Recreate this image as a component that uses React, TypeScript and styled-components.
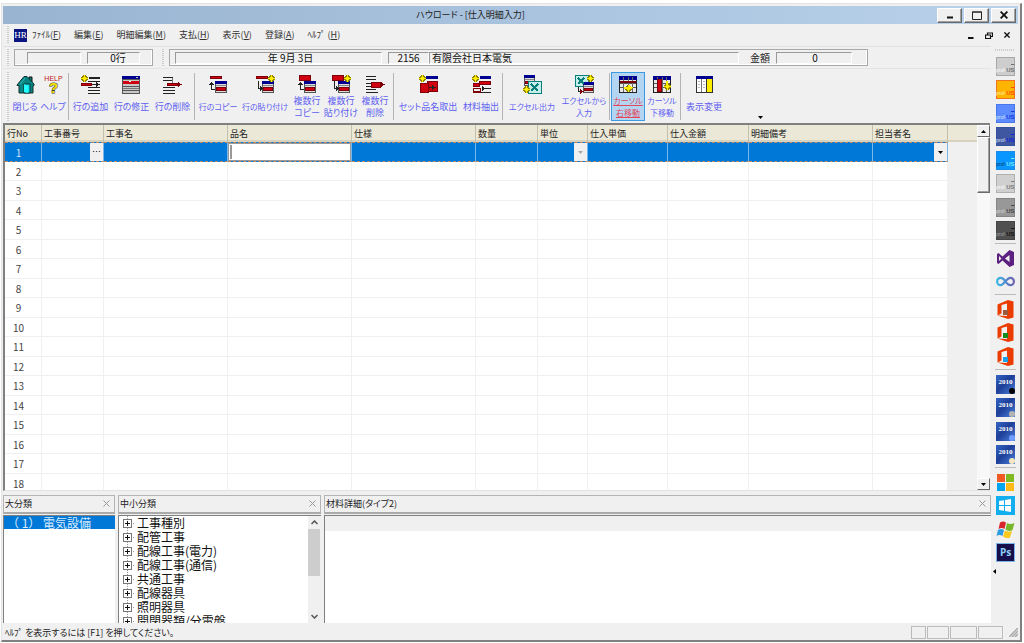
import React from "react";
import styled, { createGlobalStyle, css } from "styled-components";

const Global = createGlobalStyle`
  * { box-sizing: border-box; }
  html, body { margin: 0; background: #fff; }
  body, button, input {
    font-family: "Noto Sans CJK JP", "Liberation Sans", sans-serif;
    font-size: 9px;
    line-height: 12px;
    color: #222;
    font-feature-settings: "palt";
  }
  button { margin: 0; padding: 0; border: 0; background: none; }
  svg { display: block; flex: none; }
`;

/* ---------- frame ---------- */

const Frame = styled.div`
  height: 100vh;
  min-height: 560px;
  padding: 3px 2px 1px 1px;
`;
const Win = styled.div`
  height: 100%;
  display: flex;
  flex-direction: column;
  background: #f0f0f0;
  border: 1px solid #e3e3e3;
  border-right: 2px solid #808080;
  border-bottom: 2px solid #808080;
  padding: 2px 2px 0 1px;
`;
const TitleBar = styled.header`
  flex: none;
  height: 18px;
  display: grid;
  grid-template-columns: 1fr auto 1fr;
  align-items: center;
  background: linear-gradient(90deg, #99b4d1, #b9d1ea);
  padding-right: 2px;
`;
const Title = styled.h1`
  grid-column: 2;
  margin: 0 78px 0 0;
  font-size: 9px;
  font-weight: 400;
  line-height: 14px;
`;
const Caption = styled.div`
  display: flex;
  justify-content: flex-end;
  gap: 2px;
`;
const raised = css`
  background: #f0f0f0;
  border: 1px solid;
  border-color: #fff #696969 #696969 #fff;
`;
const CaptionButton = styled.button`
  ${raised}
  width: 25px;
  height: 15px;
  display: grid;
  place-items: center;
  box-shadow: inset -1px -1px #a0a0a0;
`;
const MenuBar = styled.nav`
  flex: none;
  height: 22px;
  display: flex;
  align-items: center;
  gap: 13px;
  padding: 0 2px 0 4px;
`;
const Grip = styled.span`
  flex: none;
  width: 2px;
  align-self: stretch;
  margin: 2px 0;
  background: repeating-linear-gradient(#ccc 0 1px, #f0f0f0 1px 2px);
`;
const MenuLead = styled.div`
  display: flex;
  align-items: center;
  align-self: stretch;
  gap: 5px;
`;
const Logo = styled.span`
  width: 13px;
  height: 13px;
  background: #0a1580;
  color: #fff;
  font: 9px/13px "Liberation Serif", serif;
  text-align: center;
`;
const MenuItem = styled.button`
  white-space: nowrap;
  line-height: 14px;
  color: #333;
`;
const MdiButtons = styled.div`
  margin-left: auto;
  display: flex;
`;
const MdiButton = styled.button`
  width: 18px;
  height: 14px;
  display: grid;
  place-items: center;
`;
const Main = styled.div`
  flex: 1;
  min-height: 0;
  display: flex;
`;
const Work = styled.main`
  flex: 1;
  min-width: 0;
  display: flex;
  flex-direction: column;
`;

/* ---------- information strip ---------- */

const InfoBar = styled.div`
  flex: none;
  height: 22px;
  display: flex;
  align-items: center;
  gap: 5px;
  padding-left: 4px;
  border-top: 1px solid #e0e0e0;
`;
const InfoGroup = styled.div<{ $wide?: boolean }>`
  display: flex;
  align-items: center;
  height: 17px;
  border: 1px solid #a8a8a8;
  box-shadow: inset -1px -1px #fff;
  gap: 6px;
  ${(p) =>
    p.$wide
      ? "flex: 1; max-width: 699px; padding: 0 15px 0 5px;"
      : "width: 139px; padding: 0 12px; margin-right: 4px;"}
`;
const Field = styled.input<{ $w?: number; $left?: boolean; $indent?: number }>`
  ${(p) => (p.$w ? `width: ${p.$w}px; flex: none;` : "flex: 1; min-width: 0;")}
  height: 12px;
  padding: 0 2px 0 ${(p) => p.$indent ?? 2}px;
  border: 1px solid;
  border-color: #999 #fff #fff #999;
  background: #f0f0f0;
  font-size: 10px;
  line-height: 10px;
  color: #111;
  text-align: ${(p) => (p.$left ? "left" : "center")};
`;
const NamePair = styled.div`
  flex: 1;
  display: flex;
`;
const FieldLabel = styled.label`
  flex: none;
  margin-left: 5px;
  font-size: 10px;
`;

/* ---------- toolbar ---------- */

const ToolBar = styled.div`
  flex: none;
  height: 55px;
  display: flex;
  align-items: stretch;
  padding: 3px 0 2px 4px;
  border-top: 1px solid #e4e4e4;
`;
const ToolGrip = styled(Grip)`
  margin: 0 2px 0 0;
`;
const ToolSep = styled.span`
  flex: none;
  width: 1px;
  margin: 1px;
  background: #b4b4b4;
`;
const Tool = styled.button<{ $w: number; $on?: boolean }>`
  flex: none;
  width: ${(p) => p.$w}px;
  display: flex;
  flex-direction: column;
  align-items: center;
  padding-top: 2px;
  border: 1px solid ${(p) => (p.$on ? "#3c9be0" : "transparent")};
  background: ${(p) => (p.$on ? "#b4d5f2" : "none")};
  color: ${(p) => (p.$on ? "#e2475a" : "#5f5ff0")};
  text-decoration: ${(p) => (p.$on ? "underline" : "none")};
`;
const ToolLabel = styled.span<{ $compact?: boolean }>`
  flex: 1;
  display: grid;
  align-content: center;
  white-space: pre;
  font-size: ${(p) => (p.$compact ? 8 : 9)}px;
  line-height: 12px;
`;
const Overflow = styled.button`
  align-self: flex-end;
  width: 10px;
  height: 7px;
  margin-left: 29px;
  display: grid;
  place-items: center;
`;

/* ---------- grid ---------- */

const GridBox = styled.section`
  flex: 1;
  min-height: 0;
  display: flex;
  border-top: 2px solid #808080;
  border-left: 2px solid #808080;
  border-bottom: 1px solid #e3e3e3;
  margin-right: 1px;
`;
const GridView = styled.div`
  flex: 1;
  min-width: 0;
  overflow: hidden;
  background: linear-gradient(#ebe8d7 0 15px, #d6d2c0 15px 17px, #f0f0f0 17px);
`;
const Table = styled.table`
  width: 943px;
  table-layout: fixed;
  border-collapse: separate;
  border-spacing: 0;
`;
const Th = styled.th`
  height: 17px;
  padding: 0 2px;
  font-weight: 400;
  text-align: left;
  white-space: nowrap;
  line-height: 13px;
  border-right: 1px solid #c4c0ae;
`;
const Tr = styled.tr<{ $sel?: boolean }>`
  height: 20px;
  &:nth-child(even) { height: 19px; }
  background: ${(p) => (p.$sel ? "#0078d7" : "#fff")};
`;
const Td = styled.td<{ $sel?: boolean; $no?: boolean }>`
  padding: 0;
  border-right: 1px solid ${(p) => (p.$sel ? "#7ab8ea" : "#f0f0f0")};
  border-bottom: 1px solid #f0f0f0;
  ${(p) => p.$sel && "border-top: 1px dashed #b98a66; border-bottom: 1px dashed #b98a66;"}
  ${(p) => p.$no && "padding-right: 9px; text-align: center; font-size: 10px; line-height: 13px;"}
  color: ${(p) => (p.$sel ? "#cfe6fa" : "#444")};
`;
const CellEnd = styled.div`
  display: flex;
  justify-content: flex-end;
`;
const CellButton = styled.button<{ $dim?: boolean }>`
  width: 13px;
  height: 18px;
  display: grid;
  place-items: center;
  background: #f0f0f0;
  color: ${(p) => (p.$dim ? "#a8a8a8" : "#000")};
`;
const CellInput = styled.input`
  display: block;
  width: 100%;
  height: 14px;
  padding: 0 2px;
  background: #fff;
  border: 0;
  border-left: 2px solid #999;
  outline: none;
  font-size: 10px;
`;
const EditCell = styled.div`
  display: flex;
  align-items: center;
  background: #fff;
  border: 1px solid #999;
  height: 18px;
  padding-left: 1px;
`;
const ScrollCol = styled.div`
  flex: none;
  width: 13px;
  display: flex;
  flex-direction: column;
  background: #f8f8f8;
`;
const ScrollButton = styled.button`
  ${raised}
  flex: none;
  height: 12px;
  display: grid;
  place-items: center;
`;
const Thumb = styled.div`
  ${raised}
  flex: none;
  height: 56px;
  margin-bottom: auto;
  box-shadow: inset -1px -1px #a0a0a0;
`;

/* ---------- docked panes ---------- */

const Panes = styled.div`
  flex: none;
  height: 134px;
  display: flex;
  gap: 3px;
  padding: 4px 0 2px;
`;
const Pane = styled.section<{ $w?: number }>`
  ${(p) => (p.$w ? `flex: none; width: ${p.$w}px;` : "flex: 1; min-width: 0;")}
  display: flex;
  flex-direction: column;
  gap: 1px;
`;
const PaneHead = styled.div`
  flex: none;
  height: 19px;
  display: flex;
  justify-content: space-between;
  align-items: center;
  padding: 0 4px 1px 1px;
  border: 1px solid #b4b4b4;
  border-bottom: 2px solid #aaa;
`;
const PaneTitle = styled.h2`
  margin: 0;
  font-size: 9px;
  font-weight: 400;
`;
const PaneBody = styled.div`
  flex: 1;
  min-height: 0;
  display: flex;
  overflow: hidden;
  background: #fff;
  border-top: 1px solid #808080;
  border-left: 1px solid #808080;
`;
const Category = styled.button`
  flex: 1;
  height: 13px;
  padding-left: 3px;
  background: #0078d7;
  color: #d8ecff;
  font-size: 12px;
  line-height: 13px;
  text-align: left;
  white-space: pre;
  font-feature-settings: normal;
`;
const Tree = styled.ul`
  flex: 1;
  margin: 0;
  padding: 0 0 0 4px;
  list-style: none;
  overflow: hidden;
`;
const TreeItem = styled.li`
  display: flex;
  align-items: center;
  gap: 2px;
  height: 14px;
  font-size: 12px;
  line-height: 14px;
  color: #111;
  white-space: nowrap;
`;
const FlatScroll = styled.div`
  flex: none;
  width: 13px;
  display: flex;
  flex-direction: column;
  background: #f0f0f0;
`;
const FlatButton = styled.button`
  height: 13px;
  display: grid;
  place-items: center;
`;
const FlatThumb = styled.div`
  height: 47px;
  margin: 0 1px auto 0;
  background: #cdcdcd;
`;
const DetailStrip = styled.div`
  flex: 1;
  height: 15px;
  background: #f0f0f0;
`;

/* ---------- launcher dock ---------- */

const Dock = styled.aside`
  flex: none;
  width: 27px;
  display: flex;
  flex-direction: column;
  align-items: center;
  padding: 3px 1px 0 2px;
`;
const DockGrip = styled.span`
  width: 20px;
  height: 2px;
  margin-bottom: 6px;
  background: repeating-linear-gradient(90deg, #ccc 0 1px, #f0f0f0 1px 2px);
`;
const DockGroup = styled.div`
  display: flex;
  flex-direction: column;
  align-items: center;
  width: 21px;
  padding-bottom: 3px;
  & + & { border-top: 1px solid #bbb; padding-top: 5px; }
`;
const DockButton = styled.button`
  width: 19px;
  height: 19px;
  & + & { margin-top: 4px; }
  &:nth-child(3), &:nth-child(5), &:nth-child(7) { margin-top: 5px; }
`;
const DockMore = styled.button`
  align-self: flex-start;
  width: 6px;
  height: 10px;
  margin-top: 1px;
`;

/* ---------- status bar ---------- */

const Status = styled.footer`
  flex: none;
  height: 15px;
  display: flex;
  align-items: center;
  gap: 1px;
`;
const StatusText = styled.span`
  flex: 1;
  padding-left: 2px;
`;
const StatusPane = styled.span<{ $w: number }>`
  width: ${(p) => p.$w}px;
  height: 13px;
  border: 1px solid #bcbcbc;
`;
const SizeGrip = styled.span`
  margin-left: 5px;
`;

/* ---------- drawings ---------- */

type R = [number, number, number, number, string];
const K = "#222";
const N = "#000090";
const D = "#d00010";
const M = "#7d0008";
const G = "#b8b8b8";
const Y = "#ffee00";

const Px = ({ r, children }: { r: R[]; children?: React.ReactNode }) => (
  <svg width="19" height="19" viewBox="0 0 19 19" shapeRendering="crispEdges" aria-hidden="true">
    {r.map(([x, y, w, h, f], i) => (
      <rect key={i} x={x} y={y} width={w} height={h} fill={f} />
    ))}
    {children}
  </svg>
);

const star = (x: number, y: number): R[] => [
  [x + 2, y, 3, 7, "#8c8400"],
  [x, y + 2, 7, 3, "#8c8400"],
  [x + 1, y + 1, 5, 5, "#8c8400"],
  [x + 3, y, 1, 7, Y],
  [x, y + 3, 7, 1, Y],
  [x + 2, y + 2, 3, 3, Y],
];
const sheet = (x: number, y: number, w: number, h: number): R[] => [
  [x, y, w, h, "#555"],
  [x + 1, y + 1, w - 2, h - 2, "#ddd"],
  [x, y, w, 3, N],
  [x + 1, y + 4, w - 2, 1, "#888"],
  [x + 1, y + 6, w - 2, h - 8, M],
  [x + 2, y + 7, w - 4, h - 10, D],
];
const bar = (x: number, y: number, w: number, h: number): R[] => [
  [x, y, w, h, M],
  [x + 1, y + 1, w - 2, h - 2, D],
];
const upArrow: R[] = [[2, 7, 1, 8, K], [1, 8, 3, 1, K], [0, 9, 5, 1, K], [2, 14, 4, 1, K]];
const downArrow: R[] = [[2, 6, 1, 8, K], [2, 13, 5, 1, K], [4, 11, 1, 5, K], [5, 12, 1, 3, K]];
const rightArrow = (x: number, y: number, c: string): R[] => [
  [x, y, 1, 5, c],
  [x + 1, y + 1, 1, 3, c],
  [x + 2, y + 2, 2, 1, c],
];
const gridBase: R[] = [
  [0, 1, 18, 17, K],
  [1, 4, 16, 13, "#e8e8e8"],
  [0, 1, 18, 4, N],
  [1, 8, 16, 1, "#555"],
  [1, 12, 16, 1, "#555"],
  [4, 2, 1, 15, "#666"],
  [9, 2, 1, 15, "#666"],
  [13, 2, 1, 15, "#666"],
];

const icons: Record<string, React.ReactNode> = {
  close: (
    <svg width="19" height="19" viewBox="0 0 19 19" aria-hidden="true">
      <path d="M13 2h3v5h-3z" fill="#067a78" stroke="#111" />
      <path d="M1 10 8 1.500h3L18 9v1.500h-1V18H3v-7.500H1z" fill="#078583" stroke="#13312f" />
      <path d="M4 9.500 9 3" stroke="#30bcb9" />
      <path d="M8 9h6v9H8z" fill="#12e3ee" stroke="#111" strokeWidth=".8" />
      <path d="M8 9l4 2v7l-4-1z" fill="#22ffff" />
    </svg>
  ),
  help: (
    <svg width="19" height="19" viewBox="0 0 19 19" aria-hidden="true">
      <text x="9.500" y="6" textAnchor="middle" fontFamily="Liberation Sans" fontSize="7" fill="#c01818">HELP</text>
      <text x="9.500" y="18" textAnchor="middle" fontFamily="Liberation Sans" fontWeight="700" fontSize="15" fill="#f5e400" stroke="#333" strokeWidth="1" paintOrder="stroke">?</text>
    </svg>
  ),
  add: <Px r={[[8, 2, 11, 2, K], [7, 6, 12, 1, K], ...bar(0, 8, 11, 3), [11, 9, 5, 1, K], ...rightArrow(15, 7, K), [7, 12, 12, 1, K], [7, 15, 12, 1, K], [7, 18, 12, 1, K], ...star(0, 0)]} />,
  edit: <Px r={[[0, 1, 18, 18, "#555"], [1, 5, 16, 13, "#c8c8c8"], [0, 1, 18, 3, N], [1, 6, 16, 3, D], [7, 6, 2, 1, "#fff"], [1, 11, 16, 1, "#555"], [1, 13, 16, 1, "#777"], [1, 15, 16, 1, "#555"], [14, 2, 2, 1, G]]} />,
  del: <Px r={[[0, 2, 10, 1, K], [0, 5, 10, 1, K], ...bar(4, 8, 11, 3), ...rightArrow(15, 7, M), [0, 12, 12, 1, K], [0, 15, 12, 1, K], [0, 18, 12, 1, K], [9, 3, 1, 5, "#777"]]} />,
  copy: <Px r={[...bar(1, 1, 12, 3), ...sheet(6, 6, 12, 12), ...upArrow]} />,
  paste: <Px r={[...bar(0, 1, 12, 3), ...sheet(6, 6, 12, 12), ...downArrow, ...star(12, 0)]} />,
  mcopy: <Px r={[...bar(1, 0, 12, 6), ...sheet(6, 6, 12, 12), ...upArrow]} />,
  mpaste: <Px r={[...bar(0, 0, 12, 6), ...sheet(6, 6, 12, 12), ...downArrow, ...star(12, 0)]} />,
  mdel: <Px r={[[0, 1, 10, 1, K], [0, 4, 10, 1, K], ...bar(5, 7, 10, 6), ...rightArrow(15, 7, M), [0, 8, 5, 1, K], [0, 11, 5, 1, K], [0, 14, 10, 1, K], [0, 17, 12, 1, K]]} />,
  set: <Px r={[[7, 1, 12, 3, N], ...bar(8, 6, 11, 11), ...bar(1, 8, 9, 10), [10, 12, 5, 1, K], ...rightArrow(13, 10, K), ...star(0, 0)]} />,
  pick: <Px r={[[8, 1, 11, 3, N], ...bar(7, 6, 12, 4), ...bar(1, 8, 7, 4), [1, 13, 8, 5, M], [2, 14, 6, 2, "#eee"], [11, 13, 8, 1, K], [9, 17, 10, 1, K], ...rightArrow(10, 11, K), ...star(0, 0)]} />,
  xout: (
    <Px r={[...sheet(1, 0, 11, 11), [5, 6, 14, 13, "#087f78"], [6, 7, 12, 11, "#c4eeea"], ...star(0, 11)]}>
      <path d="M8 9l7 7M15 9l-7 7" stroke="#087f78" strokeWidth="2" />
    </Px>
  ),
  xin: (
    <Px r={[[0, 0, 14, 12, "#087f78"], [1, 1, 12, 10, "#c4eeea"], ...sheet(8, 7, 11, 11), [3, 12, 1, 5, K], [3, 16, 4, 1, K], ...rightArrow(5, 14, M), ...star(12, 0)]}>
      <path d="M3 3l6 6M9 3l-6 6" stroke="#087f78" strokeWidth="2" />
    </Px>
  ),
  curR: <Px r={[...gridBase, [1, 6, 16, 2, M], ...star(6, 10), [5, 12, 5, 2, Y], ...rightArrow(10, 10, Y)]} />,
  curD: <Px r={[...gridBase, [4, 4, 5, 13, M], [5, 5, 3, 11, D], ...star(11, 8), [13, 6, 2, 6, Y], [11, 11, 6, 1, Y]]} />,
  view: (
    <Px r={[[1, 1, 17, 17, "#333"], [2, 4, 9, 13, "#fff"], [12, 4, 5, 13, Y], [1, 1, 17, 3, N], [6, 4, 1, 13, "#777"], [3, 6, 2, 1, G], [8, 6, 2, 1, G], [3, 9, 2, 1, G], [8, 9, 2, 1, G], [3, 12, 2, 1, G], [8, 12, 2, 1, G]]} />
  ),
};

type ToolDef = { id: string; label: string; w: number; compact?: boolean } | null;
const tools: ToolDef[] = [
  { id: "close", label: "閉じる", w: 28 },
  { id: "help", label: "ヘルプ", w: 28 },
  null,
  { id: "add", label: "行の追加", w: 41 },
  { id: "edit", label: "行の修正", w: 41 },
  { id: "del", label: "行の削除", w: 41 },
  null,
  { id: "copy", label: "行のコピー", w: 44, compact: true },
  { id: "paste", label: "行の貼り付け", w: 50, compact: true },
  { id: "mcopy", label: "複数行\nコピー", w: 34 },
  { id: "mpaste", label: "複数行\n貼り付け", w: 34 },
  { id: "mdel", label: "複数行\n削除", w: 34 },
  null,
  { id: "set", label: "セット品名取出", w: 66 },
  { id: "pick", label: "材料抽出", w: 40 },
  null,
  { id: "xout", label: "エクセル出力", w: 56, compact: true },
  { id: "xin", label: "エクセルから\n入力", w: 48, compact: true },
  null,
  { id: "curR", label: "カーソル\n右移動", w: 34, compact: true },
  { id: "curD", label: "カーソル\n下移動", w: 34, compact: true },
  null,
  { id: "view", label: "表示変更", w: 44 },
];

const Tri = ({ d, c = "currentColor", w = 5, h = 3 }: { d: string; c?: string; w?: number; h?: number }) => (
  <svg width={w} height={h} viewBox={`0 0 ${w} ${h}`} aria-hidden="true">
    <path d={d} fill={c} />
  </svg>
);
const DOWN = "M0 0h5L2.500 3z";
const UP = "M0 3h5L2.500 0z";

const Cross = ({ s = 7, c = "#999", w = 1 }: { s?: number; c?: string; w?: number }) => (
  <svg width={s} height={s} viewBox="0 0 7 7" aria-hidden="true">
    <path d="M.5.5l6 6M6.500.5l-6 6" stroke={c} strokeWidth={w} />
  </svg>
);

const Chevron = ({ up }: { up?: boolean }) => (
  <svg width="7" height="5" viewBox="0 0 7 5" aria-hidden="true">
    <path d={up ? "M.5 4l3-3 3 3" : "M.5 1l3 3 3-3"} fill="none" stroke="#555" strokeWidth="1.500" />
  </svg>
);

const Plus = () => (
  <svg width="12" height="14" viewBox="0 0 12 14" shapeRendering="crispEdges" aria-hidden="true">
    <path d="M4.500 0v14M8 7.500h4" stroke="#999" strokeDasharray="1 1" />
    <path d="M.5 3.500h8v8h-8z" fill="#fff" stroke="#777" />
    <path d="M2 7.500h5M4.500 5v5" stroke="#111" />
  </svg>
);

const ProfIcon = ({ bg, a, b, edge }: { bg: string; a: string; b: string; edge: string }) => (
  <svg width="19" height="19" viewBox="0 0 19 19" aria-hidden="true">
    <rect x=".5" y=".5" width="18" height="18" fill={bg} stroke={edge} />
    <text x="0" y="15" fontFamily="Liberation Sans" fontSize="5" fill={a}>
      prof-<tspan fontSize="6" fontWeight="700" fill={b}>US</tspan>
    </text>
    <path d="M15 7.500h3.500" stroke={b} />
  </svg>
);
const profs = [
  ["#cecece", "#fff", "#6e6e6e", "#a8a8a8"],
  ["#ffb400", "#fff0b0", "#ff4a00", "#f27320"],
  ["#5c8cff", "#dbe5ff", "#1038e0", "#4878ea"],
  ["#3f57a0", "#dde4fa", "#1422dc", "#35509c"],
  ["#0a96ff", "#06365c", "#72e8ff", "#1a8ce8"],
  ["#d0d0d0", "#fff", "#7a7a7a", "#b0b0b0"],
  ["#989898", "#d4d4d4", "#444", "#858585"],
  ["#505050", "#a0a0a0", "#111", "#444"],
];

const VsIcon = () => (
  <svg width="19" height="19" viewBox="0 0 19 19" aria-hidden="true">
    <path d="M13.500 1 18 3v13l-4.500 2L6.500 11.500 2.500 15 1 14V5l1.500-1 4 3.500zM13.500 6 9 9.500l4.500 3.500zM3 7v5l2.500-2.500z" fill="#5c2080" fillRule="evenodd" />
  </svg>
);
const LoopIcon = () => (
  <svg width="19" height="19" viewBox="0 0 19 19" aria-hidden="true">
    <defs>
      <linearGradient id="loop">
        <stop offset="0" stopColor="#35b8e8" />
        <stop offset="1" stopColor="#7060b0" />
      </linearGradient>
    </defs>
    <path d="M9.500 9.500C7.500 6.500 6 5.800 4.800 5.800a3.700 3.700 0 0 0 0 7.400c2.700 0 6-7.400 9.400-7.400a3.700 3.700 0 0 1 0 7.400c-1.200 0-2.700-.7-4.700-3.700z" fill="none" stroke="url(#loop)" strokeWidth="2.200" />
  </svg>
);
const OfficeIcon = ({ c }: { c: string }) => (
  <svg width="19" height="19" viewBox="0 0 19 19" aria-hidden="true">
    <path d="M1.500 4.500 12 0l5.500 1.500v16L12 19 1.500 15.500l9.500.5V3.500L5.500 5v8.500l-4 2z" fill="#eb3c00" />
    <path d="M7 10h5v5H7z" fill={c} />
  </svg>
);
const YearIcon = ({ id, c }: { id: string; c: string }) => (
  <svg width="19" height="19" viewBox="0 0 19 19" aria-hidden="true">
    <defs>
      <linearGradient id={id} x2="1" y2="1">
        <stop offset="0" stopColor="#3464c4" />
        <stop offset=".45" stopColor="#1d3f98" />
        <stop offset="1" stopColor="#4c80dc" />
      </linearGradient>
    </defs>
    <rect width="19" height="19" fill={`url(#${id})`} />
    <text x="9.500" y="9" textAnchor="middle" fontFamily="Liberation Serif" fontWeight="700" fontSize="7" fill="#fff">2010</text>
    <circle cx="16" cy="16" r="3" fill={c} />
  </svg>
);
const MsIcon = () => (
  <Px r={[[1, 1, 8, 8, "#f25a24"], [10, 1, 8, 8, "#7fba20"], [1, 10, 8, 8, "#00a4ef"], [10, 10, 8, 8, "#ffb914"]]} />
);
const Win8Icon = () => (
  <svg width="19" height="19" viewBox="0 0 19 19" aria-hidden="true">
    <rect width="19" height="19" fill="#12aeef" />
    <path d="M3 5l5-.8V9H3zM9 4l6-1v6H9zM3 10h5v4.800L3 14zM9 10h6v6l-6-1z" fill="#fff" />
  </svg>
);
const XpIcon = () => (
  <svg width="19" height="19" viewBox="0 0 19 19" aria-hidden="true">
    <path d="M4 2.500q3-2 6 0L8.500 9q-3-2-6 0z" fill="#d8252c" />
    <path d="M11 3q3 2 7.500 0L16.500 10q-3.500 2-7-.5z" fill="#76b82a" />
    <path d="M2 10q3-2 6 0L6.500 16q-3-2-6 0z" fill="#2f9be0" />
    <path d="M9 10.500q3.500 2 7 .5l-2 6.500q-3.500 1.500-7-1z" fill="#fcc81c" />
  </svg>
);
const PsIcon = () => (
  <svg width="19" height="19" viewBox="0 0 19 19" aria-hidden="true">
    <rect x=".5" y=".5" width="18" height="18" fill="#170f4c" stroke="#78b4e8" />
    <text x="9.500" y="13" textAnchor="middle" fontFamily="Open Sans, Liberation Sans" fontWeight="700" fontSize="10" fill="#8fd0f8">Ps</text>
  </svg>
);

const dock: [string, React.ReactNode][][] = [
  profs.map(([bg, a, b, edge], i) => [`prof ${i + 1}`, <ProfIcon bg={bg} a={a} b={b} edge={edge} />]),
  [["Visual Studio", <VsIcon />], ["Loop", <LoopIcon />]],
  ["#9c5a3c", "#168a1c", "#1ba0ea"].map((c, i) => [`Office ${i + 1}`, <OfficeIcon c={c} />]),
  ["#000", "#b4b4b4", "#6f9cff", "#f5e6c0"].map((c, i) => [`2010 ${i + 1}`, <YearIcon id={`y${i}`} c={c} />]),
  [["Microsoft", <MsIcon />], ["Windows 8", <Win8Icon />], ["Windows", <XpIcon />], ["Photoshop", <PsIcon />]],
];

const menus: [string, string][] = [
  ["ﾌｧｲﾙ", "F"], ["編集", "E"], ["明細編集", "M"], ["支払", "H"], ["表示", "V"], ["登録", "A"], ["ﾍﾙﾌﾟ ", "H"],
];
const columns: [string, number][] = [
  ["行No", 37], ["工事番号", 62], ["工事名", 124], ["品名", 124], ["仕様", 124], ["数量", 62],
  ["単位", 50], ["仕入単価", 80], ["仕入金額", 81], ["明細備考", 124], ["担当者名", 75],
];
const treeItems = ["工事種別", "配管工事", "配線工事(電力)", "配線工事(通信)", "共通工事", "配線器具", "照明器具", "開閉器類/分電盤"];

const MenuEntry = ({ m }: { m: [string, string] }) => (
  <MenuItem>{m[0]}(<u>{m[1]}</u>)</MenuItem>
);

const SelectedCell = ({ col }: { col: string }) => {
  if (col === "品名") return <EditCell><CellInput aria-label="品名" /></EditCell>;
  if (col === "工事番号") return <CellEnd><CellButton aria-label="工事番号を選択">…</CellButton></CellEnd>;
  if (col === "単位") return <CellEnd><CellButton $dim aria-label="単位を選択"><Tri d={DOWN} /></CellButton></CellEnd>;
  if (col === "担当者名") return <CellEnd><CellButton aria-label="担当者名を選択"><Tri d={DOWN} /></CellButton></CellEnd>;
  return null;
};

const PaneHeader = ({ title }: { title: string }) => (
  <PaneHead>
    <PaneTitle>{title}</PaneTitle>
    <button aria-label={`${title}を閉じる`}><Cross /></button>
  </PaneHead>
);

export default function App() {
  return (
    <Frame>
      <Global />
      <Win>
        <TitleBar>
          <Title>ハウロード - [仕入明細入力]</Title>
          <Caption>
            <CaptionButton aria-label="最小化">
              <svg width="8" height="8"><path d="M1 6.500h6" stroke="#111" strokeWidth="2" /></svg>
            </CaptionButton>
            <CaptionButton aria-label="最大化">
              <svg width="10" height="9"><path d="M.5 1h9v7.500h-9zM0 1h10" fill="none" stroke="#222" /></svg>
            </CaptionButton>
            <CaptionButton aria-label="閉じる"><Cross s={8} c="#111" w={1.6} /></CaptionButton>
          </Caption>
        </TitleBar>

        <MenuBar>
          <MenuLead>
            <Grip />
            <Logo>HR</Logo>
            <MenuEntry m={menus[0]} />
          </MenuLead>
          {menus.slice(1).map((m) => <MenuEntry key={m[0]} m={m} />)}
          <MdiButtons>
            <MdiButton aria-label="子ウィンドウを最小化">
              <svg width="6" height="7"><path d="M0 6h5.500" stroke="#111" strokeWidth="2" /></svg>
            </MdiButton>
            <MdiButton aria-label="子ウィンドウを元に戻す">
              <svg width="8" height="7"><path d="M2.500 3V1h5v3.500H6M.5 3h5v3.500h-5z" fill="none" stroke="#111" strokeWidth="1.200" /></svg>
            </MdiButton>
            <MdiButton aria-label="子ウィンドウを閉じる"><Cross s={6} c="#111" w={1.6} /></MdiButton>
          </MdiButtons>
        </MenuBar>

        <Main>
          <Work>
            <InfoBar>
              <Grip />
              <InfoGroup>
                <Field $w={54} readOnly aria-label="伝票" />
                <Field $w={53} $indent={11} readOnly aria-label="行数" defaultValue="0行" />
              </InfoGroup>
              <Grip />
              <InfoGroup $wide>
                <Field $w={207} $indent={26} readOnly aria-label="日付" defaultValue="年 9月 3日" />
                <NamePair>
                  <Field $w={41} readOnly aria-label="仕入先コード" defaultValue="2156" />
                  <Field $left readOnly aria-label="仕入先名" defaultValue="有限会社日本電気" />
                </NamePair>
                <FieldLabel htmlFor="amount">金額</FieldLabel>
                <Field id="amount" $w={76} $indent={4} readOnly defaultValue="0" />
              </InfoGroup>
            </InfoBar>

            <ToolBar role="toolbar">
              <ToolGrip />
              {tools.map((t, i) =>
                t ? (
                  <Tool key={i} $w={t.w} $on={t.id === "curR"}>
                    {icons[t.id]}
                    <ToolLabel $compact={t.compact}>{t.label}</ToolLabel>
                  </Tool>
                ) : (
                  <ToolSep key={i} />
                )
              )}
              <Overflow aria-label="ツールバーオプション"><Tri d={DOWN} c="#000" /></Overflow>
            </ToolBar>

            <GridBox>
              <GridView>
                <Table>
                  <colgroup>
                    {columns.map(([n, w]) => <col key={n} width={w} />)}
                  </colgroup>
                  <thead>
                    <tr>{columns.map(([n]) => <Th key={n}>{n}</Th>)}</tr>
                  </thead>
                  <tbody>
                    {Array.from({ length: 18 }, (_, r) => (
                      <Tr key={r} $sel={r === 0}>
                        {columns.map(([n], c) => (
                          <Td key={n} $sel={r === 0} $no={c === 0}>
                            {c === 0 ? r + 1 : r === 0 && <SelectedCell col={n} />}
                          </Td>
                        ))}
                      </Tr>
                    ))}
                  </tbody>
                </Table>
              </GridView>
              <ScrollCol>
                <ScrollButton aria-label="上へ"><Tri d={UP} c="#000" /></ScrollButton>
                <Thumb />
                <ScrollButton aria-label="下へ"><Tri d={DOWN} c="#000" /></ScrollButton>
              </ScrollCol>
            </GridBox>

            <Panes>
              <Pane $w={112}>
                <PaneHeader title="大分類" />
                <PaneBody><Category>{"（ 1） 電気設備"}</Category></PaneBody>
              </Pane>
              <Pane $w={203}>
                <PaneHeader title="中小分類" />
                <PaneBody>
                  <Tree>
                    {treeItems.map((t) => <TreeItem key={t}><Plus />{t}</TreeItem>)}
                  </Tree>
                  <FlatScroll>
                    <FlatButton aria-label="上へ"><Chevron up /></FlatButton>
                    <FlatThumb />
                    <FlatButton aria-label="下へ"><Chevron /></FlatButton>
                  </FlatScroll>
                </PaneBody>
              </Pane>
              <Pane>
                <PaneHeader title="材料詳細(タイプ2)" />
                <PaneBody><DetailStrip /></PaneBody>
              </Pane>
            </Panes>
          </Work>

          <Dock>
            <DockGrip />
            {dock.map((g, i) => (
              <DockGroup key={i}>
                {g.map(([name, icon]) => <DockButton key={name} aria-label={name}>{icon}</DockButton>)}
              </DockGroup>
            ))}
            <DockMore aria-label="その他"><Tri d="M3 0v5L0 2.500z" c="#000" w={3} h={5} /></DockMore>
          </Dock>
        </Main>

        <Status>
          <StatusText>ﾍﾙﾌﾟ を表示するには [F1] を押してください。</StatusText>
          <StatusPane $w={15} />
          <StatusPane $w={22} />
          <StatusPane $w={27} />
          <StatusPane $w={25} />
          <SizeGrip>
            <svg width="9" height="9" viewBox="0 0 9 9" aria-hidden="true">
              <path d="M0 9 9 0M3 9l6-6M6 9l3-3" stroke="#a8a8a8" strokeWidth="1.500" />
            </svg>
          </SizeGrip>
        </Status>
      </Win>
    </Frame>
  );
}
